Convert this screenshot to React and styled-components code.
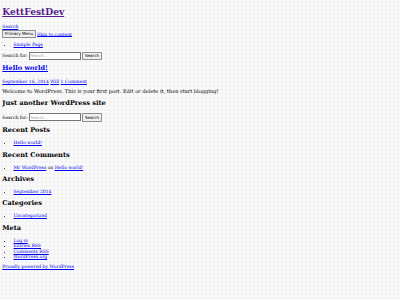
import React from "react";
import styled, { createGlobalStyle } from "styled-components";

const GlobalStyle = createGlobalStyle`
  html {
    background-color: #f9f9f9;
    background-image: radial-gradient(circle at 2px 2px, #f0f0f0 0.8px, transparent 1.2px);
    background-size: 4px 4px;
  }
  body {
    margin: 2.3px;
    font-family: "DejaVu Serif", serif;
    font-size: 4.5px;
    line-height: 1.22;
    color: #000;
  }
  a {
    color: #0000ee;
  }
`;

const SiteTitle = styled.h1`
  font-size: 9.1px;
  line-height: 1.15;
  margin: 5px 0 6.5px;
  a {
    color: #551a8b;
  }
`;

const Block = styled.div`
  margin: 0;
`;

const NativeButton = styled.button`
  font-family: "DejaVu Sans", sans-serif;
  font-size: 4.1px;
  padding: 0.6px 1.5px;
  background: #efefef;
  border: 0.6px solid #8f8f8f;
  border-radius: 0.8px;
  color: #000;
`;

const List = styled.ul`
  margin: ${(p) => (p.$tight ? "0.9em" : "1em")} 0;
  padding-left: 11.2px;
`;

const SearchForm = styled.form`
  margin: 0;
  display: block;
  label {
    margin-right: 1px;
  }
`;

const SearchInput = styled.input`
  font-family: "DejaVu Sans", sans-serif;
  font-size: 3.9px;
  width: 49px;
  padding: 0.5px 0.6px;
  border: 0.6px solid #767676;
  background: #fff;
  margin-right: 1.5px;
  &::placeholder {
    color: #a0a0a0;
  }
`;

const Heading = styled.h2`
  font-size: 6.6px;
  line-height: 1.16;
  margin: 0.85em 0;
`;

const Para = styled.p`
  font-size: 5.1px;
  line-height: 1.16;
  margin: 0.9em 0;
`;

function Search() {
  return (
    <SearchForm onSubmit={(e) => e.preventDefault()}>
      <label>Search for:</label>
      <SearchInput placeholder="Search …" />
      <NativeButton type="submit">Search</NativeButton>
    </SearchForm>
  );
}

export default function App() {
  return (
    <>
      <GlobalStyle />
      <header>
        <SiteTitle>
          <a href="#">KettFestDev</a>
        </SiteTitle>
        <Block>
          <a href="#">Search</a>
        </Block>
        <Block>
          <NativeButton>Primary Menu</NativeButton> <a href="#">Skip to content</a>
        </Block>
        <List $tight>
          <li>
            <a href="#">Sample Page</a>
          </li>
        </List>
        <Search />
      </header>
      <article>
        <Heading>
          <a href="#">Hello world!</a>
        </Heading>
        <Block>
          <a href="#">September 16, 2014</a> <a href="#">Will</a>{" "}
          <a href="#">1 Comment</a>
        </Block>
        <Para>
          Welcome to WordPress. This is your first post. Edit or delete it, then
          start blogging!
        </Para>
      </article>
      <aside>
        <Heading>Just another WordPress site</Heading>
        <Search />
        <Heading>Recent Posts</Heading>
        <List>
          <li>
            <a href="#">Hello world!</a>
          </li>
        </List>
        <Heading>Recent Comments</Heading>
        <List>
          <li>
            <a href="#">Mr WordPress</a> on <a href="#">Hello world!</a>
          </li>
        </List>
        <Heading>Archives</Heading>
        <List>
          <li>
            <a href="#">September 2014</a>
          </li>
        </List>
        <Heading>Categories</Heading>
        <List>
          <li>
            <a href="#">Uncategorized</a>
          </li>
        </List>
        <Heading>Meta</Heading>
        <List>
          <li>
            <a href="#">Log in</a>
          </li>
          <li>
            <a href="#">Entries RSS</a>
          </li>
          <li>
            <a href="#">Comments RSS</a>
          </li>
          <li>
            <a href="#">WordPress.org</a>
          </li>
        </List>
      </aside>
      <footer>
        <a href="#">Proudly powered by WordPress</a>
      </footer>
    </>
  );
}
